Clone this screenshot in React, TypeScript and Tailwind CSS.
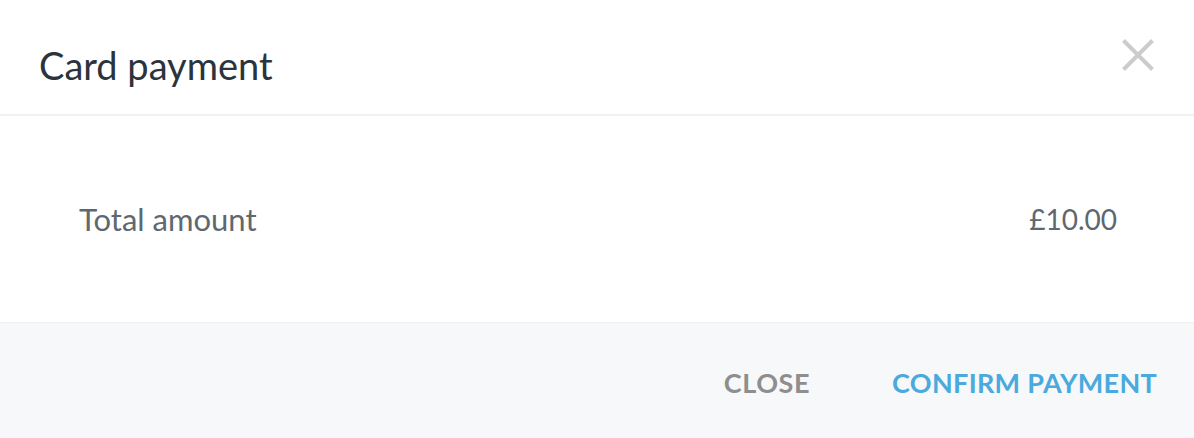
import React from "react";

function CloseIcon() {
  return (
    <svg width="32" height="32" viewBox="0 0 32 32" fill="none" aria-hidden="true">
      <path d="M1.5 1.5 L30.5 30.5 M30.5 1.5 L1.5 30.5" stroke="#cccccc" strokeWidth="4" strokeLinecap="butt" />
    </svg>
  );
}

export default function App() {
  return (
    <div
      className="w-[1194px] h-[438px] bg-white flex flex-col overflow-hidden"
      style={{ fontFamily: "Lato, 'Open Sans', sans-serif" }}
    >
      {/* header */}
      <div className="h-[116px] flex items-start justify-between pl-[39px] pr-[40px] border-b-2 border-[#f2f2f2]">
        <h1 className="mt-[45px] text-[38px] leading-[40px] text-[#2b333c] font-normal">Card payment</h1>
        <button className="mt-[39px] flex items-center justify-center">
          <CloseIcon />
        </button>
      </div>

      {/* body */}
      <div className="h-[206px] flex items-center justify-between pl-[79px] pr-[77px]">
        <span className="text-[31px] text-[#5e6870]">Total amount</span>
        <span className="text-[28px] text-[#5e6870]">£10.00</span>
      </div>

      {/* footer */}
      <div className="flex-1 bg-[#f7f8fa] border-t border-[#eef0f2] flex items-center justify-end gap-[82px] pr-[37px] pt-[6px]">
        <button className="text-[27px] font-bold tracking-[0.6px] text-[#8e8e8e]">CLOSE</button>
        <button className="text-[27px] font-bold tracking-[0.3px] text-[#4aa9dd]">CONFIRM PAYMENT</button>
      </div>
    </div>
  );
}
